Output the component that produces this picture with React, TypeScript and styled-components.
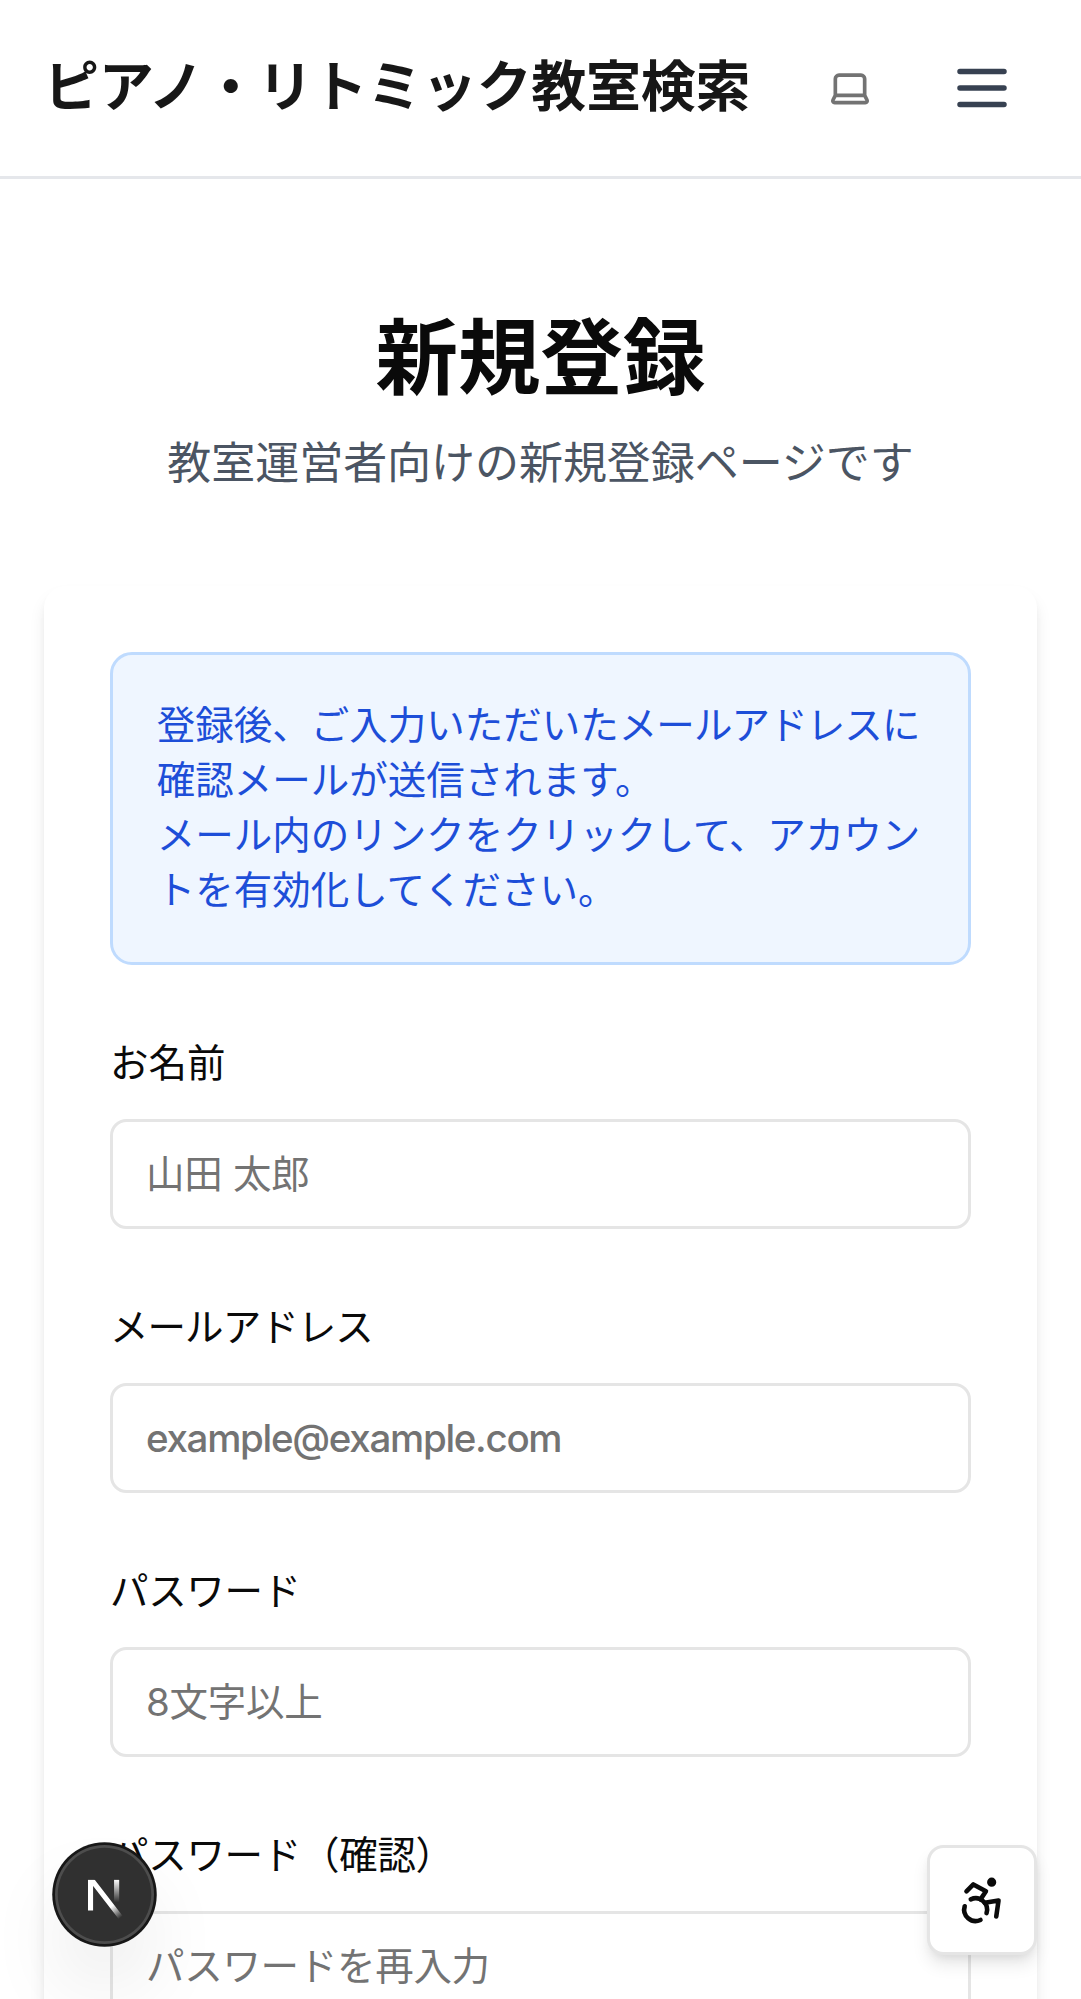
import React from 'react';
import styled, { createGlobalStyle } from 'styled-components';

const GlobalStyle = createGlobalStyle`
  *, *::before, *::after { box-sizing: border-box; }
  body {
    margin: 0;
    background: #ffffff;
    color: #0a0a0a;
    font-family: Inter, "Noto Sans CJK JP", sans-serif;
    overflow: hidden;
  }
`;

const Page = styled.div`
  position: relative;
  height: 1999px;
  overflow: hidden;
  background: #ffffff;
`;

const Header = styled.header`
  display: flex;
  align-items: center;
  justify-content: space-between;
  height: 179px;
  padding: 0 44px;
  border-bottom: 3px solid #e5e7eb;
`;

const SiteTitle = styled.a`
  padding-bottom: 4px;
  font-size: 55px;
  font-weight: 700;
  line-height: 77px;
  letter-spacing: -0.3px;
  color: #171717;
  white-space: nowrap;
`;

const HeaderActions = styled.div`
  display: flex;
  align-items: center;
  gap: 33px;
`;

const IconButton = styled.button<{ $size: number; $color: string }>`
  display: flex;
  align-items: center;
  justify-content: center;
  width: ${(p) => p.$size}px;
  height: ${(p) => p.$size}px;
  padding: 0;
  border: 0;
  background: transparent;
  color: ${(p) => p.$color};
  svg { display: block; flex: none; }
`;

const Main = styled.main`
  display: flex;
  flex-direction: column;
  gap: 90px;
  padding: 129.75px 44px 0;
`;

const Intro = styled.div`
  display: flex;
  flex-direction: column;
  gap: 22px;
  text-align: center;
`;

const Heading = styled.h1`
  margin: 0;
  font-size: 82.5px;
  font-weight: 700;
  line-height: 99px;
`;

const Subtitle = styled.p`
  margin: 0;
  font-size: 44px;
  line-height: 66px;
  letter-spacing: -0.05px;
  color: #4b5563;
`;

const Card = styled.section`
  display: flex;
  flex-direction: column;
  gap: 66px;
  padding: 66px;
  border-radius: 22px;
  background: #ffffff;
  box-shadow: 0 11px 16.5px -2.75px rgba(0, 0, 0, 0.1), 0 5.5px 11px -5.5px rgba(0, 0, 0, 0.1);
`;

const Notice = styled.div`
  height: 313.5px;
  padding: 43px 0 44px 43.75px;
  border: 3px solid #bfdbfe;
  border-radius: 22px;
  background: #eff6ff;
  color: #1d4ed8;
  font-size: 38.5px;
  line-height: 55px;
  white-space: nowrap;
`;

const Tracked = styled.span<{ $tracking: number }>`
  letter-spacing: ${(p) => p.$tracking}px;
`;

const Field = styled.div`
  display: flex;
  flex-direction: column;
  gap: 22px;
`;

const Label = styled.label<{ $tracking: number }>`
  padding-bottom: 2px;
  font-size: 38.5px;
  line-height: 64px;
  letter-spacing: ${(p) => p.$tracking}px;
`;

const Input = styled.input<{ $tracking: number; $weight: number }>`
  width: 100%;
  height: 110px;
  padding: 0 33px;
  border: 3px solid #e5e5e5;
  border-radius: 16.5px;
  background: #ffffff;
  font-family: inherit;
  font-size: 38.5px;
  font-weight: ${(p) => p.$weight};
  letter-spacing: ${(p) => p.$tracking}px;
  outline: none;
  &::placeholder { color: #737373; opacity: 1; }
`;

const DevBadge = styled.button`
  position: absolute;
  left: 55px;
  top: 1845px;
  width: 99px;
  height: 99px;
  padding: 0;
  border: 0;
  border-radius: 50%;
  display: flex;
  align-items: center;
  justify-content: center;
  background: #303030;
  box-shadow: 0 0 0 2.75px #171717, inset 0 0 0 2.75px rgba(255, 255, 255, 0.14),
    0 44px 88px -22px rgba(0, 0, 0, 0.24);
  svg { flex: none; }
`;

const AccessibilityButton = styled.button`
  position: absolute;
  left: 927px;
  top: 1845px;
  width: 110px;
  height: 110px;
  padding: 0;
  display: flex;
  align-items: center;
  justify-content: center;
  border: 3px solid #e5e5e5;
  border-radius: 16.5px;
  background: #ffffff;
  color: #0a0a0a;
  box-shadow: 0 11px 16.5px -2.75px rgba(0, 0, 0, 0.1), 0 5.5px 11px -5.5px rgba(0, 0, 0, 0.1);
`;

const strokeProps = {
  viewBox: '0 0 24 24',
  fill: 'none',
  stroke: 'currentColor',
  strokeWidth: 2,
  strokeLinecap: 'round' as const,
  strokeLinejoin: 'round' as const,
};

const LaptopIcon = () => (
  <svg width="44" height="44" {...strokeProps}>
    <path d="M20 16V7a2 2 0 0 0-2-2H6a2 2 0 0 0-2 2v9m16 0H4m16 0 1.28 2.55a1 1 0 0 1-.9 1.45H3.62a1 1 0 0 1-.9-1.45L4 16" />
  </svg>
);

const MenuIcon = () => (
  <svg width="66" height="66" {...strokeProps}>
    <path d="M4 6h16M4 12h16M4 18h16" />
  </svg>
);

const AccessibilityIcon = () => (
  <svg width="55" height="55" {...strokeProps}>
    <circle cx="16" cy="4" r="1" />
    <path d="m18 19 1-7-6 1" />
    <path d="m5 8 3-3 5.5 3-2.36 3.5" />
    <path d="M4.24 14.5a5 5 0 0 0 6.88 6" />
    <path d="M13.76 17.5a5 5 0 0 0-6.88-6" />
  </svg>
);

const NextMark = () => (
  <svg width="110" height="110" viewBox="0 0 40 40" fill="none">
    <g transform="translate(12.4 13)">
      <path d="M13.3 15.2 L2.34 1 V12.6" stroke="url(#diagonal)" strokeWidth="1.86" mask="url(#corner)" />
      <path d="M11.825 1.5 V13.1" stroke="url(#upright)" strokeWidth="1.86" />
    </g>
    <defs>
      <linearGradient id="diagonal" x1="9.956" y1="11.123" x2="15.478" y2="17.967" gradientUnits="userSpaceOnUse">
        <stop stopColor="white" />
        <stop offset="0.604" stopColor="white" stopOpacity="0" />
        <stop offset="1" stopColor="white" stopOpacity="0" />
      </linearGradient>
      <linearGradient id="upright" x1="11.822" y1="1.4" x2="11.791" y2="9.625" gradientUnits="userSpaceOnUse">
        <stop stopColor="white" />
        <stop offset="1" stopColor="white" stopOpacity="0" />
      </linearGradient>
      <mask id="corner" maskUnits="userSpaceOnUse" x="-1" y="-3" width="20" height="22">
        <rect x="-1" y="-1" width="20" height="20" fill="white" />
        <rect x="0" y="-1" width="5" height="2.5" fill="black" />
      </mask>
    </defs>
  </svg>
);

const fields = [
  { id: 'name', label: 'お名前', labelTracking: 0, placeholder: '山田 太郎', tracking: -0.25, weight: 400, type: 'text' },
  { id: 'email', label: 'メールアドレス', labelTracking: -0.95, placeholder: 'example@example.com', tracking: -1.3, weight: 500, type: 'email' },
  { id: 'password', label: 'パスワード', labelTracking: -0.35, placeholder: '8文字以上', tracking: -0.25, weight: 400, type: 'password' },
  { id: 'confirm', label: 'パスワード（確認）', labelTracking: -0.3, placeholder: 'パスワードを再入力', tracking: -0.3, weight: 400, type: 'password' },
];

export default function App() {
  return (
    <Page>
      <GlobalStyle />
      <Header>
        <SiteTitle>ピアノ・リトミック教室検索</SiteTitle>
        <HeaderActions>
          <IconButton $size={88} $color="#737373" aria-label="テーマ">
            <LaptopIcon />
          </IconButton>
          <IconButton $size={110} $color="#374151" aria-label="メニュー">
            <MenuIcon />
          </IconButton>
        </HeaderActions>
      </Header>
      <Main>
        <Intro>
          <Heading>新規登録</Heading>
          <Subtitle>教室運営者向けの新規登録ページです</Subtitle>
        </Intro>
        <Card>
          <Notice>
            登録後、ご入力いただいた<Tracked $tracking={-0.9}>メールアドレス</Tracked>に
            <br />
            確認メールが送信されます。
            <br />
            メール内のリンクを<Tracked $tracking={-0.35}>クリックして、アカウン</Tracked>
            <br />
            トを有効化してください。
          </Notice>
          {fields.map((f) => (
            <Field key={f.id}>
              <Label htmlFor={f.id} $tracking={f.labelTracking}>{f.label}</Label>
              <Input id={f.id} type={f.type} placeholder={f.placeholder} $tracking={f.tracking} $weight={f.weight} />
            </Field>
          ))}
        </Card>
      </Main>
      <DevBadge aria-label="Next.js">
        <NextMark />
      </DevBadge>
      <AccessibilityButton aria-label="アクセシビリティ">
        <AccessibilityIcon />
      </AccessibilityButton>
    </Page>
  );
}
